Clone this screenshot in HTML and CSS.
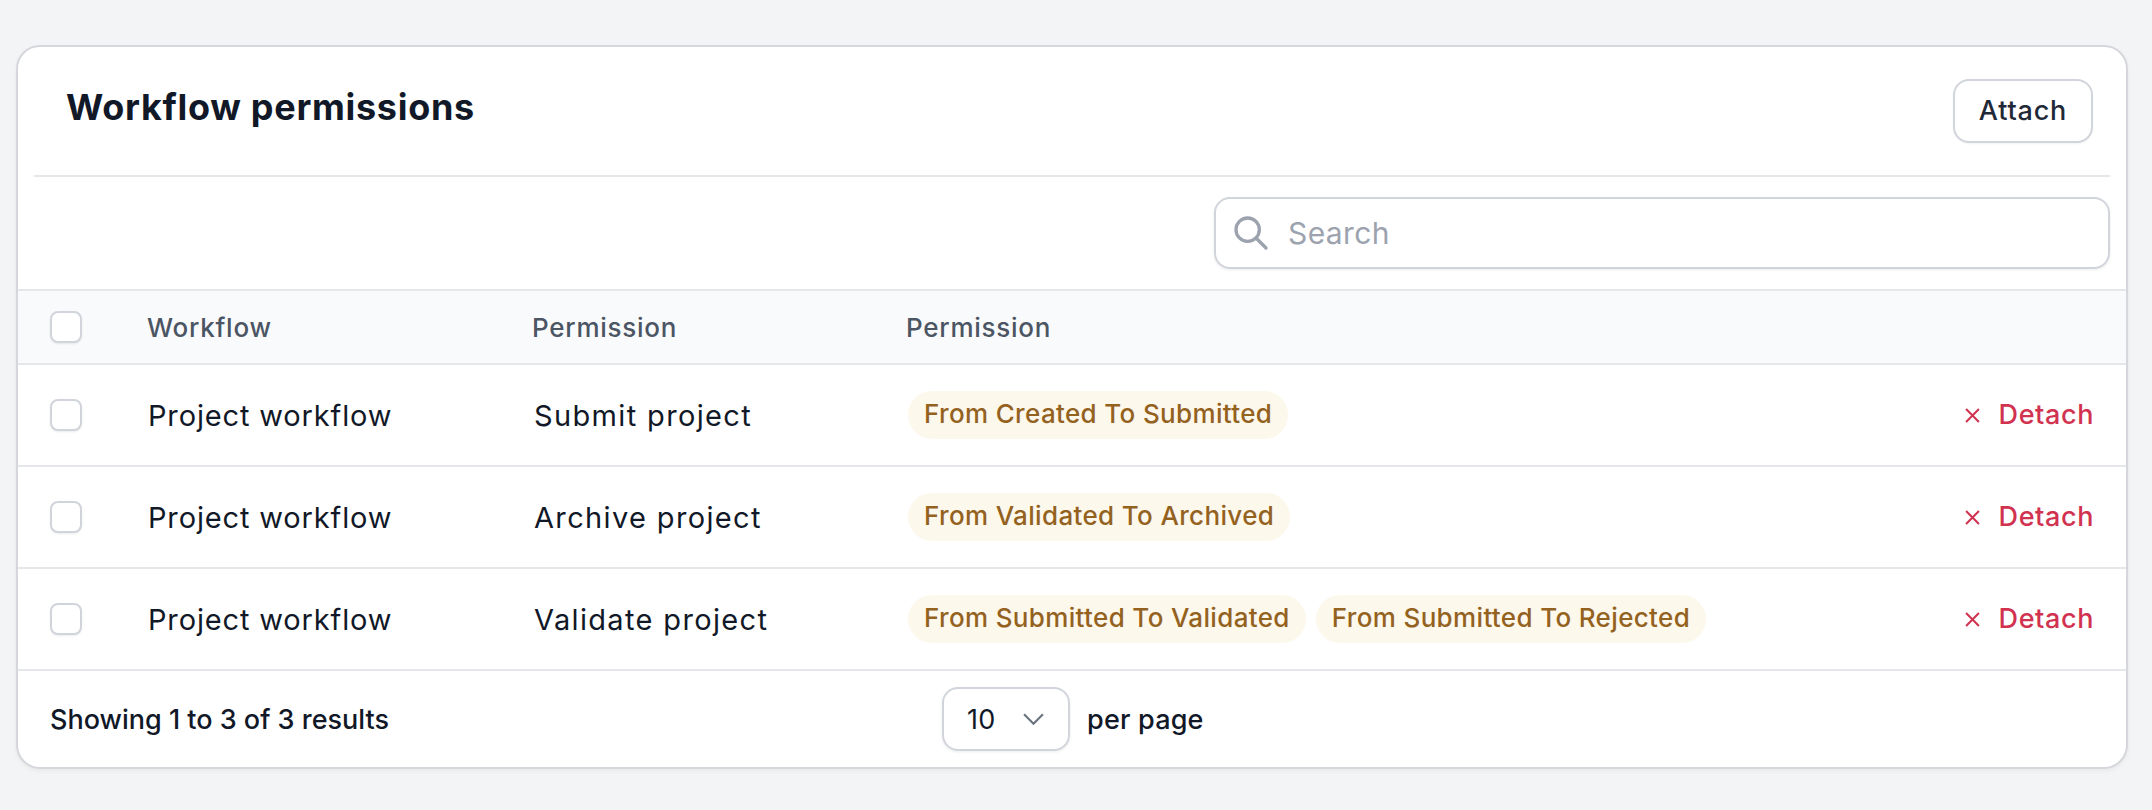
FILE: index.html
```html
<!DOCTYPE html>
<html lang="en">
<head>
<meta charset="utf-8">
<title>Workflow permissions</title>
<link rel="stylesheet" href="styles.css">
</head>
<body>
<main class="card">
  <header class="card-head">
    <h2 class="title">Workflow permissions</h2>
    <button class="btn-attach" type="button">Attach</button>
  </header>
  <div class="toolbar">
    <label class="search">
      <svg class="search-icon" viewBox="0 0 24 24" fill="none" stroke="currentColor" stroke-width="2" stroke-linecap="round" stroke-linejoin="round"><path d="M21 21l-6-6m2-5a7 7 0 11-14 0 7 7 0 0114 0z"/></svg>
      <span class="search-ph">Search</span>
    </label>
  </div>
  <div class="row row-head">
    <div class="cell-check"><span class="check"></span></div>
    <div class="th col-a">Workflow</div>
    <div class="th col-b">Permission</div>
    <div class="th col-c">Permission</div>
  </div>
  <div class="row">
    <div class="cell-check"><span class="check"></span></div>
    <div class="td col-a">Project workflow</div>
    <div class="td col-b">Submit project</div>
    <div class="badges col-c"><span class="badge">From Created To Submitted</span></div>
    <a class="detach"><svg class="x" viewBox="0 0 14 14" fill="none" stroke="currentColor" stroke-width="1.9"><path d="M1 1l12 12M13 1L1 13"/></svg><span>Detach</span></a>
  </div>
  <div class="row">
    <div class="cell-check"><span class="check"></span></div>
    <div class="td col-a">Project workflow</div>
    <div class="td col-b">Archive project</div>
    <div class="badges col-c"><span class="badge">From Validated To Archived</span></div>
    <a class="detach"><svg class="x" viewBox="0 0 14 14" fill="none" stroke="currentColor" stroke-width="1.9"><path d="M1 1l12 12M13 1L1 13"/></svg><span>Detach</span></a>
  </div>
  <div class="row">
    <div class="cell-check"><span class="check"></span></div>
    <div class="td col-a">Project workflow</div>
    <div class="td col-b">Validate project</div>
    <div class="badges col-c"><span class="badge">From Submitted To Validated</span><span class="badge">From Submitted To Rejected</span></div>
    <a class="detach"><svg class="x" viewBox="0 0 14 14" fill="none" stroke="currentColor" stroke-width="1.9"><path d="M1 1l12 12M13 1L1 13"/></svg><span>Detach</span></a>
  </div>
  <footer class="foot">
    <div class="foot-left">Showing 1 to 3 of 3 results</div>
    <div class="foot-mid">
      <div class="select"><span>10</span><svg class="chev" viewBox="0 0 20 12" fill="none" stroke="currentColor" stroke-width="2"><path d="M1 1l9 9 9-9"/></svg></div>
      <span class="per">per page</span>
    </div>
  </footer>
</main>
</body>
</html>
```
FILE: styles.css
```css
* { box-sizing: border-box; }
html, body { margin: 0; height: 100%; }
body {
  background: #f3f4f6;
  padding: 45px 24px 0 16px;
  font-family: "Inter", "Liberation Sans", sans-serif;
  color: #111827;
  overflow: hidden;
}
.card {
  background: #fff;
  border: 2px solid #d5d7dc;
  border-radius: 24px;
  box-shadow: 0 2px 4px rgba(0, 0, 0, .05);
  overflow: hidden;
}
.card-head {
  display: flex;
  justify-content: space-between;
  align-items: flex-start;
  height: 130px;
  margin: 0 16px;
  padding: 32px 17px 0 32px;
  border-bottom: 2px solid #e5e7eb;
}
.title {
  margin: 4px 0 0;
  font-size: 36px;
  line-height: 48px;
  font-weight: 700;
  letter-spacing: .7px;
}
.btn-attach {
  width: 140px;
  height: 64px;
  background: #fff;
  border: 2px solid #d1d5db;
  border-radius: 16px;
  font: 500 27px "Inter", sans-serif;
  letter-spacing: .8px;
  color: #1f2937;
  box-shadow: 0 1px 2px rgba(0, 0, 0, .05);
  padding: 0 0 1px;
}
.toolbar {
  display: flex;
  justify-content: flex-end;
  height: 112px;
  padding: 20px 16px 0 0;
}
.search {
  display: flex;
  align-items: center;
  width: 896px;
  height: 72px;
  border: 2px solid #d1d5db;
  border-radius: 16px;
  box-shadow: 0 1px 3px rgba(0, 0, 0, .08);
  padding-left: 15px;
}
.search-icon { width: 40px; height: 40px; color: #9ca3af; }
.search-ph { margin-left: 17px; font-size: 30px; letter-spacing: .4px; color: #9ca3af; }
.row {
  display: flex;
  align-items: center;
  height: 102px;
  border-top: 2px solid #e5e7eb;
}
.row-head {
  height: 74px;
  background: #f9fafb;
}
.cell-check { width: 130px; flex: none; padding-left: 32px; display: flex; }
.check {
  width: 32px;
  height: 32px;
  background: #fff;
  border: 2px solid #d1d5db;
  border-radius: 8px;
  box-shadow: 0 1px 2px rgba(0, 0, 0, .08);
}
.col-a { width: 386px; flex: none; }
.col-b { width: 374px; flex: none; }
.col-c { flex: 1; }
.th { font-size: 26px; font-weight: 500; color: #4b5563; margin-left: -1px; letter-spacing: .75px; }
.th.col-c { margin-left: 0; }
.td { font-size: 29px; letter-spacing: .85px; }
.td.col-b { letter-spacing: 1.35px; }
.badges { display: flex; gap: 10px; }
.badge {
  height: 48px;
  line-height: 46px;
  padding: 0 16px;
  border-radius: 24px;
  background: #fdf8ec;
  color: #94621f;
  font-size: 26px;
  font-weight: 500;
  letter-spacing: .35px;
}
.detach {
  display: flex;
  align-items: center;
  gap: 19px;
  margin-right: 32px;
  color: #d13250;
  font-size: 27px;
  font-weight: 500;
  letter-spacing: .6px;
}
.detach span { position: relative; top: -1px; }
.x { width: 15px; height: 15px; }
.foot {
  display: flex;
  align-items: center;
  height: 98px;
  border-top: 2px solid #e5e7eb;
}
.foot-left { width: 924px; padding-left: 32px; font-size: 27px; font-weight: 500; }
.foot-mid { display: flex; align-items: center; gap: 17px; font-size: 27px; font-weight: 500; letter-spacing: .2px; }
.select {
  display: flex;
  align-items: center;
  justify-content: space-between;
  width: 128px;
  height: 64px;
  padding: 0 24px 0 23px;
  border: 2px solid #d1d5db;
  border-radius: 16px;
  box-shadow: 0 1px 3px rgba(0, 0, 0, .08);
  font-weight: 400;
}
.chev { width: 21px; height: 13px; color: #6b7280; }
```
